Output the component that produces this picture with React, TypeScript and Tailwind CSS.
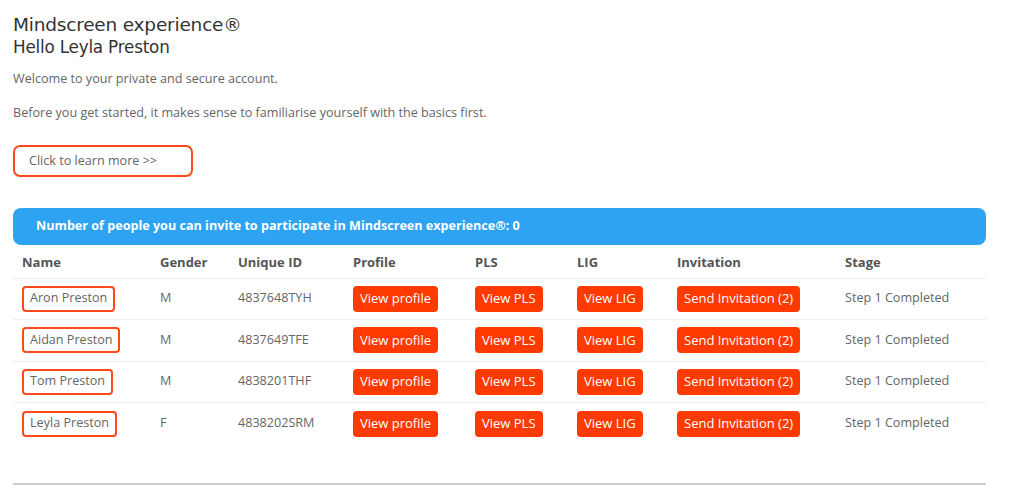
const rows = [
  { name: "Aron Preston", gender: "M", id: "4837648TYH" },
  { name: "Aidan Preston", gender: "M", id: "4837649TFE" },
  { name: "Tom Preston", gender: "M", id: "4838201THF" },
  { name: "Leyla Preston", gender: "F", id: "4838202SRM" },
];

const cols = ["w-[138px]", "w-[78px]", "w-[115px]", "w-[122px]", "w-[102px]", "w-[100px]", "w-[168px]", ""];

const RedButton = ({ label }: { label: string }) => (
  <button className="h-[26px] px-[7px] rounded-[4px] bg-[#ff3a00] text-white text-[13px] leading-none">
    {label}
  </button>
);

const App = () => {
  return (
    <div className="w-[1024px] h-[489px] bg-white px-[13px] overflow-hidden font-['Open_Sans',sans-serif]">
      <div className="pt-[13px]">
        <h1 className="text-[18.5px] leading-[23px] text-[#333] font-['DejaVu_Sans',sans-serif] tracking-[-0.2px]">Mindscreen experience®</h1>
        <h2 className="text-[16.8px] leading-[22px] text-[#333] font-['DejaVu_Sans',sans-serif] tracking-[-0.2px]">Hello Leyla Preston</h2>
      </div>
      <p className="mt-[12px] text-[12.6px] leading-[18px] text-[#666]">Welcome to your private and secure account.</p>
      <p className="mt-[16px] text-[12.6px] leading-[18px] text-[#666]">Before you get started, it makes sense to familiarise yourself with the basics first.</p>
      <button className="mt-[23px] w-[180px] h-[32px] border-2 border-[#ff4a1c] rounded-[7px] text-left pl-[14px] text-[12.6px] text-[#666]">
        Click to learn more &gt;&gt;
      </button>

      <div className="mt-[31px] w-[973px]">
        <div className="h-[37px] bg-[#2ea3f2] rounded-[8px] flex items-center pl-[23px] text-white text-[12.6px] font-bold">
          Number of people you can invite to participate in Mindscreen experience®: 0
        </div>
        <table className="w-full table-fixed border-collapse text-[12.6px]">
          <thead>
            <tr className="h-[33px] border-b border-[#eee] text-[#555] font-bold">
              {["Name", "Gender", "Unique ID", "Profile", "PLS", "LIG", "Invitation", "Stage"].map((h, i) => (
                <th key={h} className={`${cols[i]} text-left px-[9px] pt-[2px] font-bold text-[13px]`}>{h}</th>
              ))}
            </tr>
          </thead>
          <tbody>
            {rows.map((r) => (
              <tr key={r.id} className="h-[41.5px] border-b border-[#eee] last:border-b-0 text-[#666]">
                <td className="px-[9px]">
                  <span className="inline-flex items-center h-[26px] px-[6px] border-2 border-[#ff4a1c] rounded-[4px] leading-none">{r.name}</span>
                </td>
                <td className="px-[9px]">{r.gender}</td>
                <td className="px-[9px]">{r.id}</td>
                <td className="px-[9px]"><RedButton label="View profile" /></td>
                <td className="px-[9px]"><RedButton label="View PLS" /></td>
                <td className="px-[9px]"><RedButton label="View LIG" /></td>
                <td className="px-[9px]"><RedButton label="Send Invitation (2)" /></td>
                <td className="px-[9px]">Step 1 Completed</td>
              </tr>
            ))}
          </tbody>
        </table>
        <div className="mt-[39px] h-[2px] bg-[#ccc]" />
      </div>
    </div>
  );
};

export default App;
